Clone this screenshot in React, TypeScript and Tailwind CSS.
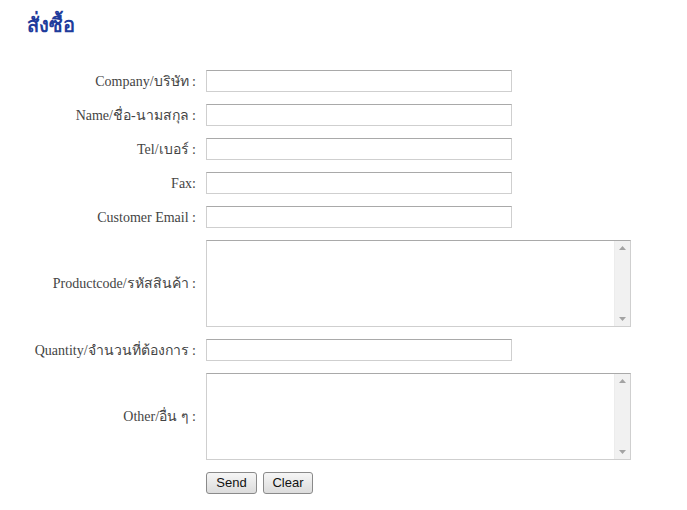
import React from "react";

const labelCls =
  "flex items-center justify-end text-[14px] text-[#444] whitespace-nowrap";
const inputCls =
  "block h-[22px] w-[306px] border border-[#cfcfcf] border-t-[#a9a9a9] bg-white outline-none";
const btnCls =
  "h-[22px] rounded-[3px] border border-[#8a8a8a] bg-gradient-to-b from-[#f6f6f6] to-[#dcdcdc] px-[8px] text-[13px] text-[#111] [font-family:'Liberation_Sans',Arial,sans-serif]";

function Area() {
  return (
    <div className="flex h-[87px] w-[425px] border border-[#cfcfcf] border-t-[#a9a9a9] bg-white">
      <textarea className="block h-full flex-1 resize-none overflow-hidden bg-white outline-none" />
      <div className="flex w-[16px] flex-col items-center justify-between border-l border-[#ececec] bg-[#f1f1f1] py-[5px]">
        <svg width="7" height="4" viewBox="0 0 7 4">
          <path d="M0 4 L3.5 0 L7 4 Z" fill="#a3a3a3" />
        </svg>
        <svg width="7" height="4" viewBox="0 0 7 4">
          <path d="M0 0 L3.5 4 L7 0 Z" fill="#a3a3a3" />
        </svg>
      </div>
    </div>
  );
}

export default function App() {
  return (
    <div className="min-h-[510px] w-[687px] bg-white [font-family:'Liberation_Serif','Times_New_Roman',serif]">
      <div className="pl-[27px] pt-[12px]">
        <h1 className="text-[20px] font-bold leading-[26px] text-[#1f3c9c] [font-family:'DejaVu_Sans','Noto_Sans',sans-serif]">
          สั่งซื้อ
        </h1>
      </div>
      <div className="mt-[32px] grid grid-cols-[196px_auto] gap-x-[10px] gap-y-[12px]">
        <label className={labelCls}>Company/บริษัท :</label>
        <input className={inputCls} />
        <label className={labelCls}>Name/ชื่อ-นามสกุล :</label>
        <input className={inputCls} />
        <label className={labelCls}>Tel/เบอร์ :</label>
        <input className={inputCls} />
        <label className={labelCls}>Fax:</label>
        <input className={inputCls} />
        <label className={labelCls}>Customer Email :</label>
        <input className={inputCls} />
        <label className={labelCls}>Productcode/รหัสสินค้า :</label>
        <Area />
        <label className={labelCls}>Quantity/จำนวนที่ต้องการ :</label>
        <input className={inputCls} />
        <label className={labelCls}>Other/อื่น ๆ :</label>
        <Area />
        <div />
        <div className="flex gap-[6px]">
          <button className={`${btnCls} w-[51px]`}>Send</button>
          <button className={`${btnCls} w-[50px]`}>Clear</button>
        </div>
      </div>
    </div>
  );
}
